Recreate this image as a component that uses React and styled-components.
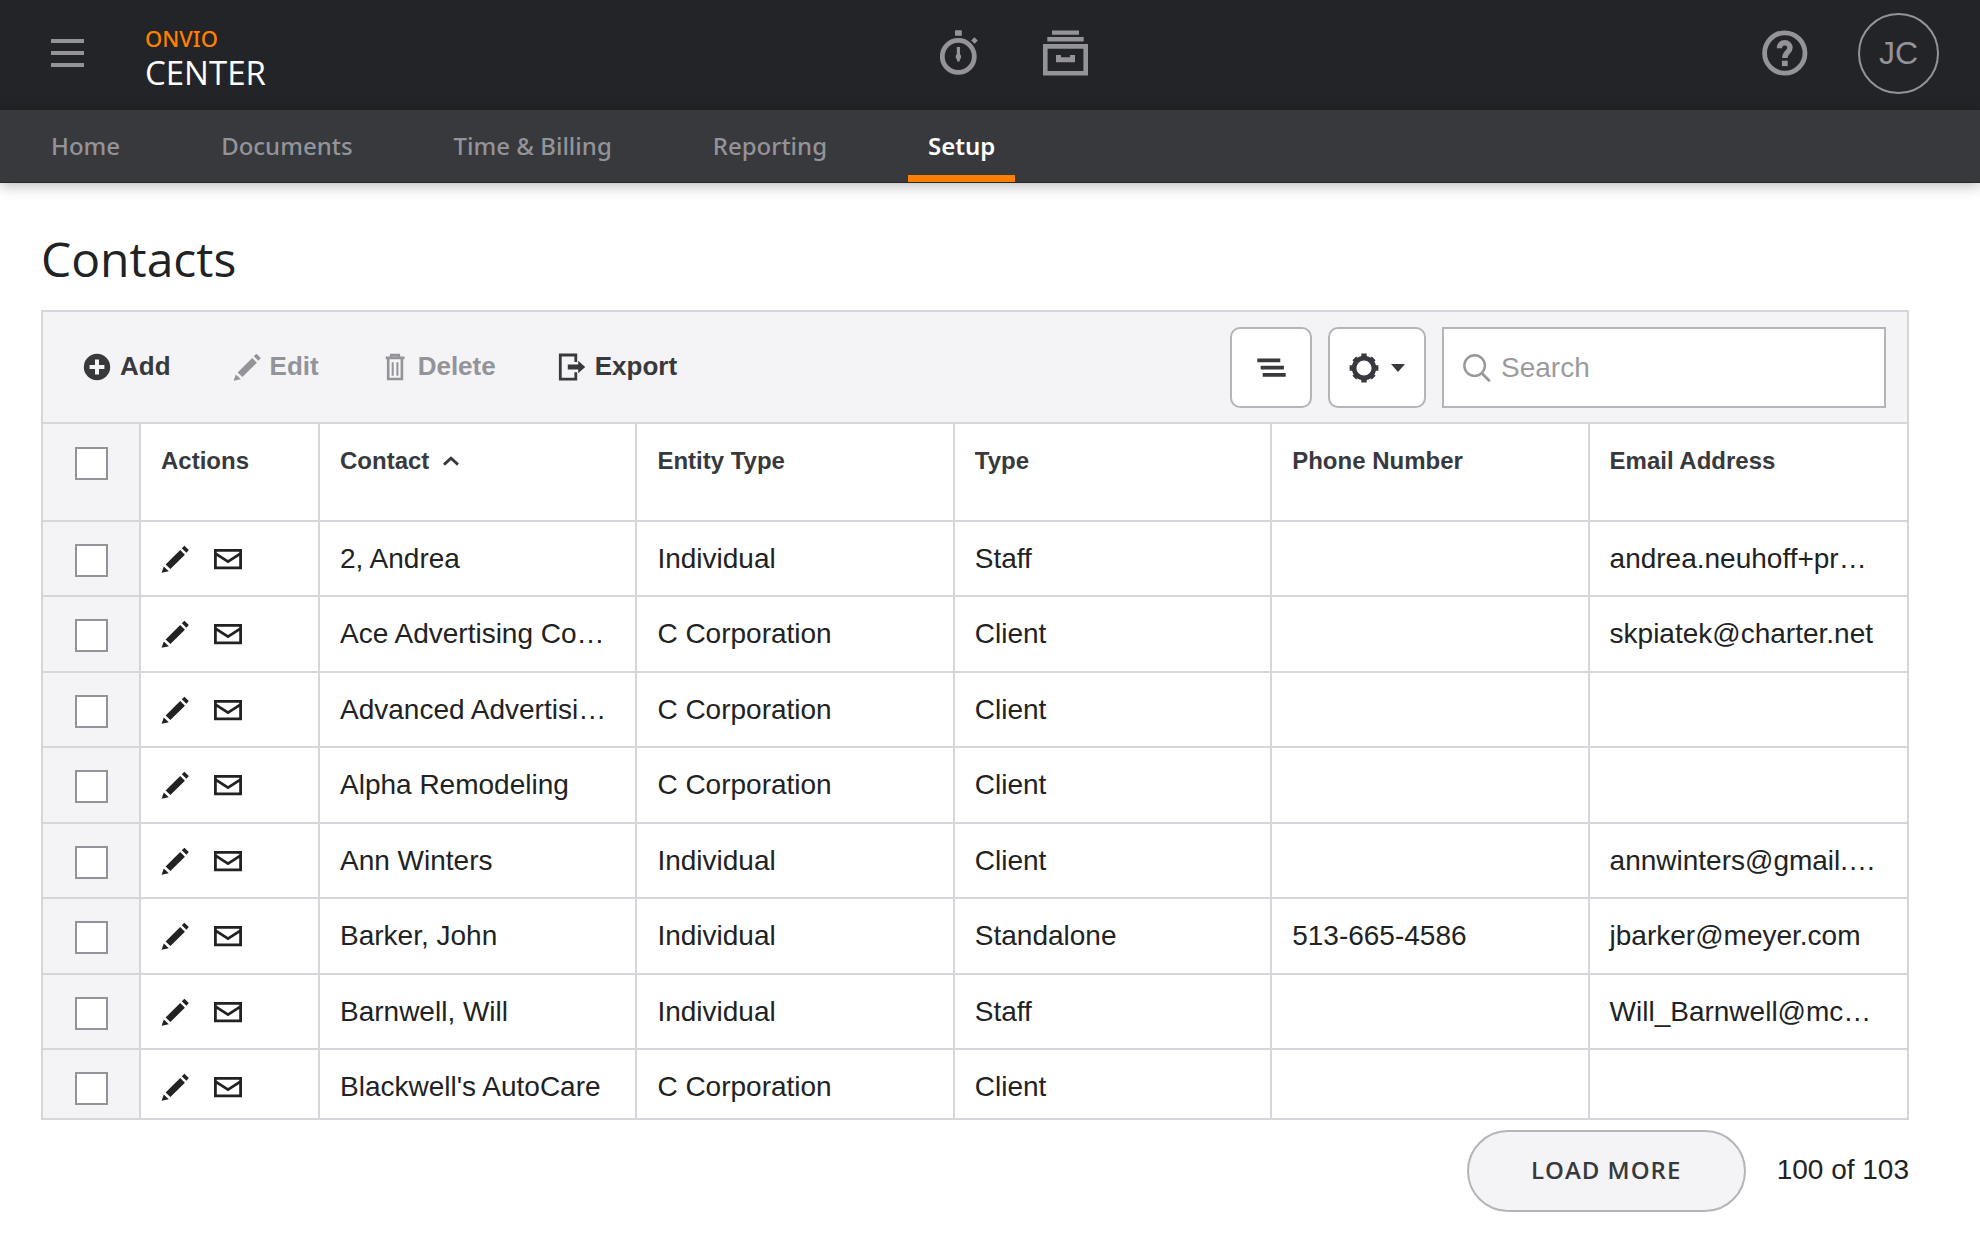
import React from "react";
import styled, { createGlobalStyle } from "styled-components";

const GlobalStyle = createGlobalStyle`
  * {
    box-sizing: border-box;
  }
  body {
    margin: 0;
    background-color: #ffffff;
    color: #212223;
    font-family: "Liberation Sans", Arial, sans-serif;
    font-size: 28px;
  }
  button,
  input {
    font-family: inherit;
  }
  svg {
    display: block;
    flex: none;
  }
`;

const titleFont = `"Open Sans", "Noto Sans", sans-serif`;
const brandFont = `"Noto Sans", "Open Sans", sans-serif`;

const Header = styled.header`
  display: flex;
  align-items: center;
  justify-content: space-between;
  height: 110px;
  padding: 0 41px 4px 51px;
  background-color: #232427;
  color: #939399;
`;

const HeaderGroup = styled.div`
  display: flex;
  align-items: center;
  gap: ${(props) => props.$gap};
`;

const PlainButton = styled.button`
  display: block;
  padding: 0;
  border: none;
  background: none;
  color: inherit;
  cursor: pointer;
`;

const Brand = styled.a`
  display: flex;
  flex-direction: column;
  padding-top: 10px;
  font-family: ${titleFont};
  font-size: 33px;
  line-height: 40px;
  color: #ffffff;
  text-decoration: none;
`;

const BrandTop = styled.span`
  font-family: ${brandFont};
  font-size: 22px;
  font-weight: 500;
  line-height: 30px;
  color: #ff8000;
`;

const Avatar = styled.button`
  width: 81px;
  height: 81px;
  padding: 0;
  border: 2px solid #939399;
  border-radius: 50%;
  background: none;
  color: #939399;
  font-size: 32px;
  cursor: pointer;
`;

const Nav = styled.nav`
  display: flex;
  gap: 61px;
  height: 73px;
  padding: 0 31px;
  border-bottom: 1px solid #28282a;
  background-color: #38393d;
  box-shadow: 0 2px 14px rgba(0, 0, 0, 0.3);
`;

const NavLink = styled.a`
  display: flex;
  align-items: center;
  padding: 0 20px 2px;
  font-family: ${brandFont};
  font-size: 24px;
  font-weight: ${(props) => (props.$active ? 600 : 500)};
  color: ${(props) => (props.$active ? "#ffffff" : "#939399")};
  box-shadow: ${(props) => (props.$active ? "inset 0 -7px #ff8000" : "none")};
  text-decoration: none;
`;

const Main = styled.main`
  padding: 44px 71px 44px 41px;
`;

const Title = styled.h1`
  margin: 0 0 19px;
  font-family: ${titleFont};
  font-size: 48px;
  font-weight: 400;
  line-height: 64px;
`;

const Panel = styled.section`
  border: 2px solid #d5d5da;
`;

const Toolbar = styled.div`
  display: flex;
  align-items: center;
  justify-content: space-between;
  padding: 15px 21px 14px 40px;
  border-bottom: 2px solid #d5d5da;
  background-color: #f4f4f7;
`;

const ToolGroup = styled.div`
  display: flex;
  align-items: center;
  gap: ${(props) => props.$gap};
`;

const ToolButton = styled.button`
  display: flex;
  align-items: center;
  gap: 9px;
  padding: 0 0 2px;
  border: none;
  background: none;
  color: #38393d;
  font-size: 26px;
  font-weight: 700;
  cursor: pointer;
  &:disabled {
    color: #939399;
    cursor: default;
  }
`;

const BoxButton = styled.button`
  display: flex;
  align-items: center;
  justify-content: center;
  gap: 12px;
  width: ${(props) => props.$width};
  height: 81px;
  padding: 0;
  border: 2px solid #b4b4b9;
  border-radius: 10px;
  background-color: #ffffff;
  color: #38393d;
  cursor: pointer;
`;

const SearchBox = styled.label`
  display: flex;
  align-items: center;
  gap: 10px;
  width: 444px;
  height: 81px;
  padding: 0 19px;
  border: 2px solid #b4b4b9;
  background-color: #ffffff;
  color: #98989a;
`;

const SearchInput = styled.input`
  flex: 1;
  min-width: 0;
  padding: 0;
  border: none;
  background: none;
  font-size: 28px;
  color: #212223;
  &:focus {
    outline: none;
  }
  &::placeholder {
    color: #9b9b9d;
    opacity: 1;
  }
`;

const Scroller = styled.div`
  max-height: 694px;
  overflow-y: auto;
  scrollbar-width: none;
`;

const Table = styled.table`
  width: 100%;
  table-layout: fixed;
  border-collapse: separate;
  border-spacing: 0;
`;

const Col = styled.col`
  width: ${(props) => props.$width};
`;

const Row = styled.tr`
  height: 75px;
  &:nth-child(even) {
    height: 76px;
  }
`;

const HeadCell = styled.th`
  height: 98px;
  padding: 23px 20px 0;
  border-right: 2px solid #d5d5da;
  border-bottom: 2px solid #d5d5da;
  color: #38393d;
  font-size: 24px;
  font-weight: 700;
  line-height: 28px;
  text-align: left;
  vertical-align: top;
  &:last-child {
    border-right: none;
  }
`;

const Cell = styled.td`
  padding: 21px 20px 0;
  border-right: 2px solid #d5d5da;
  border-bottom: 2px solid #d5d5da;
  line-height: 32px;
  overflow: hidden;
  text-overflow: ellipsis;
  vertical-align: top;
  white-space: nowrap;
  &:last-child {
    border-right: none;
  }
`;

const HeadTickCell = styled(HeadCell)`
  padding: 23px 32px 0;
  background-color: #f4f4f7;
`;

const TickCell = styled(Cell)`
  padding: 22px 32px 0;
  background-color: #f4f4f7;
`;

const Tick = styled.input`
  appearance: none;
  display: block;
  width: 33px;
  height: 33px;
  margin: 0;
  border: 2px solid #939399;
  background-color: #ffffff;
  &:checked {
    background-color: #939399;
  }
`;

const SortButton = styled(PlainButton)`
  display: flex;
  align-items: center;
  gap: 14px;
  font-size: 24px;
  font-weight: 700;
  line-height: 28px;
`;

const RowActions = styled.div`
  display: flex;
  align-items: center;
  gap: 25px;
  height: 32px;
`;

const Footer = styled.footer`
  display: flex;
  align-items: center;
  justify-content: flex-end;
  gap: 31px;
  padding-top: 10px;
`;

const LoadMore = styled.button`
  width: 279px;
  height: 82px;
  padding-bottom: 4px;
  border: 2px solid #b4b4b9;
  border-radius: 41px;
  background-color: #f4f4f7;
  color: #38393d;
  font-family: ${titleFont};
  font-size: 24px;
  font-weight: 600;
  letter-spacing: 1px;
  cursor: pointer;
`;

const Count = styled.span`
  padding-bottom: 2px;
`;

const MenuIcon = () => (
  <svg width="33" height="28" viewBox="0 0 33 28" fill="currentColor">
    <path d="M0 0h33v4H0zM0 12h33v4H0zM0 24h33v4H0z" />
  </svg>
);

const TimerIcon = () => (
  <svg width="38" height="46" viewBox="0 0 38 46" fill="currentColor">
    <circle cx="18.3" cy="26.4" r="16" fill="none" stroke="currentColor" strokeWidth="4.8" />
    <path d="M15 .3h6.8v5.4H15zM34.3 7.2l3.5 3.4-3.1 3.2-3.5-3.4zM16.8 17h3.2v7.2a3.3 3.3 0 0 1 0 5L19.6 31.4h-2.4L16.8 29.2a3.3 3.3 0 0 1 0-5z" />
  </svg>
);

const DrawerIcon = () => (
  <svg width="45" height="46" viewBox="0 0 45 46" fill="currentColor">
    <path d="M9 .4h27v4.4H9zM4.3 7h36.4v4.4H4.3zM13 25h5v2.2h9V25h5v7.2H13z" />
    <path d="M2.3 16.4h40.4v26.8H2.3z" fill="none" stroke="currentColor" strokeWidth="4.6" />
  </svg>
);

const HelpIcon = () => (
  <svg width="46" height="46" viewBox="0 0 46 46" fill="none" stroke="currentColor">
    <circle cx="22.8" cy="23" r="20.2" strokeWidth="4.8" />
    <path
      d="M17.4 18.2c0-3.3 2.3-5.4 5.3-5.4s5.3 2.1 5.3 5c0 4.4-5.2 4.6-5.2 10.3"
      strokeWidth="5.4"
    />
    <path d="M19.9 33.4h5.8" strokeWidth="5.4" />
  </svg>
);

const AddIcon = () => (
  <svg width="28" height="28" viewBox="0 0 28 28">
    <circle cx="14" cy="14" r="13.2" fill="currentColor" />
    <path d="M14 6.6v14.8M6.6 14h14.8" stroke="#f4f4f7" strokeWidth="4" />
  </svg>
);

const PencilIcon = () => (
  <svg width="28" height="28" viewBox="0 0 28 28" fill="currentColor">
    <path d="M4.6 19.4 19.2 5l4.7 4.7L9.4 24zM.6 27.8l2.2-6.4 5 4.8zM20.8 3.3 23.4.7l4.4 4.4-2.4 2.6z" />
  </svg>
);

const TrashIcon = () => (
  <svg width="28" height="28" viewBox="0 0 28 28" fill="none" stroke="currentColor" strokeWidth="2.6">
    <path d="M4.7 4.9h18.8M10.2 4.5V2h7.6v2.5M7.2 5v21h13.7V5" />
    <path d="M11.7 9.2v13.6M16.4 9.2v13.6" strokeWidth="2" />
  </svg>
);

const ExportIcon = () => (
  <svg width="28" height="28" viewBox="0 0 28 28">
    <path
      d="M17.8 9V2H2.3v24.2h15.5v-7"
      fill="none"
      stroke="currentColor"
      strokeWidth="2.8"
    />
    <path d="M9.8 11.6h10.4V7.8l7 6.2-7 6.2v-3.8H9.8z" fill="currentColor" />
  </svg>
);

const LinesIcon = () => (
  <svg width="29" height="20" viewBox="0 0 29 20" fill="currentColor">
    <path d="M.3.4h23v3.8h-23zM3.7 7.8h23.2v3.8H3.7zM5.7 15h23v3.8h-23z" />
  </svg>
);

const GearIcon = () => (
  <svg width="30" height="30" viewBox="0 0 30 30" stroke="currentColor">
    <circle cx="15" cy="15" r="9.9" fill="none" strokeWidth="4.6" />
    <path
      d="M15 .6v4M15 25.4v4M.6 15h4M25.4 15h4M5.3 5.3 7.6 7.6M22.4 22.4l2.3 2.3M5.3 24.7l2.3-2.3M22.4 7.6l2.3-2.3"
      strokeWidth="5.4"
    />
  </svg>
);

const CaretIcon = () => (
  <svg width="14" height="8" viewBox="0 0 14 8" fill="currentColor">
    <path d="M0 0h14L7 8z" />
  </svg>
);

const SearchIcon = () => (
  <svg width="28" height="28" viewBox="0 0 28 28" fill="none" stroke="currentColor">
    <circle cx="11.6" cy="11.6" r="10.3" strokeWidth="2.4" />
    <path d="m18.8 19.2 8 8" strokeWidth="2.8" />
  </svg>
);

const SortIcon = () => (
  <svg width="16" height="10" viewBox="0 0 16 10" fill="none" stroke="currentColor">
    <path d="m1 8.6 7-6.4 7 6.4" strokeWidth="2.8" />
  </svg>
);

const MailIcon = () => (
  <svg width="28" height="28" viewBox="0 0 28 28" fill="none" stroke="currentColor" strokeWidth="2.8">
    <path d="M1.4 5.4h25.2v17.4H1.4zM1.6 8.6 14 16.6l12.4-8" />
  </svg>
);

const navItems = ["Home", "Documents", "Time & Billing", "Reporting", "Setup"];

const contacts = [
  { name: "2, Andrea", entity: "Individual", type: "Staff", phone: "", email: "andrea.neuhoff+pr…" },
  { name: "Ace Advertising Co…", entity: "C Corporation", type: "Client", phone: "", email: "skpiatek@charter.net" },
  { name: "Advanced Advertisi…", entity: "C Corporation", type: "Client", phone: "", email: "" },
  { name: "Alpha Remodeling", entity: "C Corporation", type: "Client", phone: "", email: "" },
  { name: "Ann Winters", entity: "Individual", type: "Client", phone: "", email: "annwinters@gmail.…" },
  { name: "Barker, John", entity: "Individual", type: "Standalone", phone: "513-665-4586", email: "jbarker@meyer.com" },
  { name: "Barnwell, Will", entity: "Individual", type: "Staff", phone: "", email: "Will_Barnwell@mc…" },
  { name: "Blackwell's AutoCare", entity: "C Corporation", type: "Client", phone: "", email: "" },
];

export default function App() {
  return (
    <>
      <GlobalStyle />
      <Header>
        <HeaderGroup $gap="61px">
          <PlainButton aria-label="Menu">
            <MenuIcon />
          </PlainButton>
          <Brand href="#">
            <BrandTop>ONVIO</BrandTop>
            CENTER
          </Brand>
        </HeaderGroup>
        <HeaderGroup $gap="65px">
          <PlainButton aria-label="Timer">
            <TimerIcon />
          </PlainButton>
          <PlainButton aria-label="File drawer">
            <DrawerIcon />
          </PlainButton>
        </HeaderGroup>
        <HeaderGroup $gap="50px">
          <PlainButton aria-label="Help">
            <HelpIcon />
          </PlainButton>
          <Avatar>JC</Avatar>
        </HeaderGroup>
      </Header>
      <Nav>
        {navItems.map((item) => (
          <NavLink href="#" key={item} $active={item === "Setup"}>
            {item}
          </NavLink>
        ))}
      </Nav>
      <Main>
        <Title>Contacts</Title>
        <Panel>
          <Toolbar>
            <ToolGroup $gap="62px">
              <ToolButton>
                <AddIcon />
                Add
              </ToolButton>
              <ToolButton disabled>
                <PencilIcon />
                Edit
              </ToolButton>
              <ToolButton disabled>
                <TrashIcon />
                Delete
              </ToolButton>
              <ToolButton>
                <ExportIcon />
                Export
              </ToolButton>
            </ToolGroup>
            <ToolGroup $gap="16px">
              <BoxButton $width="82px" aria-label="Row density">
                <LinesIcon />
              </BoxButton>
              <BoxButton $width="98px" aria-label="Settings">
                <GearIcon />
                <CaretIcon />
              </BoxButton>
              <SearchBox>
                <SearchIcon />
                <SearchInput type="text" placeholder="Search" aria-label="Search" />
              </SearchBox>
            </ToolGroup>
          </Toolbar>
          <Scroller>
            <Table>
              <colgroup>
                <Col $width="98px" />
                <Col $width="179px" />
                <Col />
                <Col />
                <Col />
                <Col />
                <Col />
              </colgroup>
              <thead>
                <tr>
                  <HeadTickCell>
                    <Tick type="checkbox" aria-label="Select all contacts" />
                  </HeadTickCell>
                  <HeadCell>Actions</HeadCell>
                  <HeadCell>
                    <SortButton>
                      Contact
                      <SortIcon />
                    </SortButton>
                  </HeadCell>
                  <HeadCell>Entity Type</HeadCell>
                  <HeadCell>Type</HeadCell>
                  <HeadCell>Phone Number</HeadCell>
                  <HeadCell>Email Address</HeadCell>
                </tr>
              </thead>
              <tbody>
                {contacts.map((contact) => (
                  <Row key={contact.name}>
                    <TickCell>
                      <Tick type="checkbox" aria-label={`Select ${contact.name}`} />
                    </TickCell>
                    <Cell>
                      <RowActions>
                        <PlainButton aria-label={`Edit ${contact.name}`}>
                          <PencilIcon />
                        </PlainButton>
                        <PlainButton aria-label={`Email ${contact.name}`}>
                          <MailIcon />
                        </PlainButton>
                      </RowActions>
                    </Cell>
                    <Cell>{contact.name}</Cell>
                    <Cell>{contact.entity}</Cell>
                    <Cell>{contact.type}</Cell>
                    <Cell>{contact.phone}</Cell>
                    <Cell>{contact.email}</Cell>
                  </Row>
                ))}
              </tbody>
            </Table>
          </Scroller>
        </Panel>
        <Footer>
          <LoadMore>LOAD MORE</LoadMore>
          <Count>100 of 103</Count>
        </Footer>
      </Main>
    </>
  );
}
